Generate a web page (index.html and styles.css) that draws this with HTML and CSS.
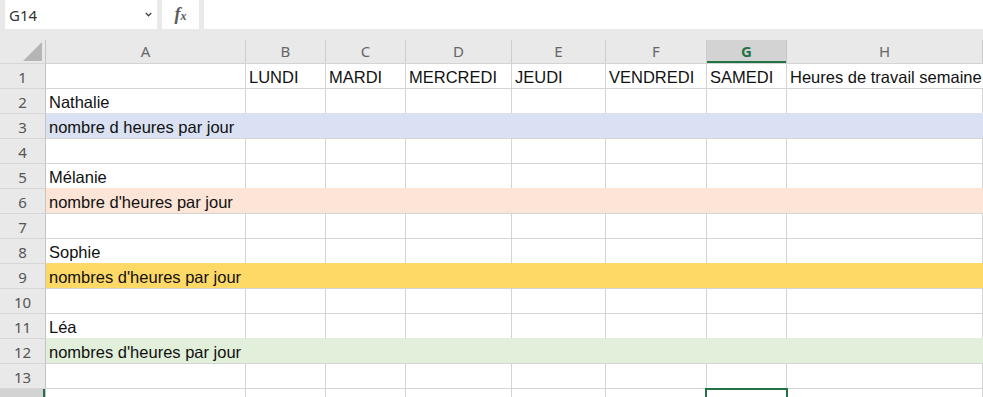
FILE: index.html
```html
<!DOCTYPE html>
<html lang="fr">
<head>
<meta charset="UTF-8" />
<title>Classeur1 - Excel</title>
<link rel="stylesheet" href="styles.css">
</head>
<body>
<div class="fbar">
	<div class="namebox">
		<span>G14</span>
		<svg width="7" height="5" viewBox="0 0 7 5"><polyline points="0.8,1 3.5,3.8 6.2,1" fill="none" stroke="#444" stroke-width="1.3"/></svg>
	</div>
	<div class="fxbox"><em>f<small>x</small></em></div>
	<div class="formula"></div>
</div>

<div class="head">
	<div class="ch corner"><svg width="19" height="19" viewBox="0 0 19 19"><polygon points="19,0 19,19 0,19" fill="#b5b5b5"/></svg></div>
	<div class="ch">A</div>
	<div class="ch">B</div>
	<div class="ch">C</div>
	<div class="ch">D</div>
	<div class="ch">E</div>
	<div class="ch">F</div>
	<div class="ch on">G</div>
	<div class="ch">H</div>
</div>

<div class="sheet">
	<div class="row">
		<div class="rh">1</div>
		<div class="c"></div>
		<div class="c">LUNDI</div>
		<div class="c">MARDI</div>
		<div class="c">MERCREDI</div>
		<div class="c">JEUDI</div>
		<div class="c">VENDREDI</div>
		<div class="c">SAMEDI</div>
		<div class="c">Heures de travail semaine</div>
	</div>
	<div class="row">
		<div class="rh">2</div>
		<div class="c">Nathalie</div>
		<div class="c"></div><div class="c"></div><div class="c"></div><div class="c"></div><div class="c"></div><div class="c"></div><div class="c"></div>
	</div>
	<div class="row">
		<div class="rh">3</div>
		<div class="c fill blue">nombre d heures par jour</div>
	</div>
	<div class="row">
		<div class="rh">4</div>
		<div class="c"></div><div class="c"></div><div class="c"></div><div class="c"></div><div class="c"></div><div class="c"></div><div class="c"></div><div class="c"></div>
	</div>
	<div class="row">
		<div class="rh">5</div>
		<div class="c">Mélanie</div>
		<div class="c"></div><div class="c"></div><div class="c"></div><div class="c"></div><div class="c"></div><div class="c"></div><div class="c"></div>
	</div>
	<div class="row">
		<div class="rh">6</div>
		<div class="c fill peach">nombre d'heures par jour</div>
	</div>
	<div class="row">
		<div class="rh">7</div>
		<div class="c"></div><div class="c"></div><div class="c"></div><div class="c"></div><div class="c"></div><div class="c"></div><div class="c"></div><div class="c"></div>
	</div>
	<div class="row">
		<div class="rh">8</div>
		<div class="c">Sophie</div>
		<div class="c"></div><div class="c"></div><div class="c"></div><div class="c"></div><div class="c"></div><div class="c"></div><div class="c"></div>
	</div>
	<div class="row">
		<div class="rh">9</div>
		<div class="c fill gold">nombres d'heures par jour</div>
	</div>
	<div class="row">
		<div class="rh">10</div>
		<div class="c"></div><div class="c"></div><div class="c"></div><div class="c"></div><div class="c"></div><div class="c"></div><div class="c"></div><div class="c"></div>
	</div>
	<div class="row">
		<div class="rh">11</div>
		<div class="c">Léa</div>
		<div class="c"></div><div class="c"></div><div class="c"></div><div class="c"></div><div class="c"></div><div class="c"></div><div class="c"></div>
	</div>
	<div class="row">
		<div class="rh">12</div>
		<div class="c fill green">nombres d'heures par jour</div>
	</div>
	<div class="row">
		<div class="rh">13</div>
		<div class="c"></div><div class="c"></div><div class="c"></div><div class="c"></div><div class="c"></div><div class="c"></div><div class="c"></div><div class="c"></div>
	</div>
	<div class="row">
		<div class="rh on">14</div>
		<div class="c"></div><div class="c"></div><div class="c"></div><div class="c"></div><div class="c"></div><div class="c"></div><div class="c sel"></div><div class="c"></div>
	</div>
</div>
</body>
</html>
```

FILE: styles.css
```css
* {
	box-sizing: border-box;
}
body {
	margin: 0;
	height: 397px;
	overflow: hidden;
	background: #e9e9e9;
	font-family: "Liberation Sans", Arial, sans-serif;
	user-select: none;
}

/* barre de formule */
.fbar {
	display: flex;
	gap: 5px;
	height: 29px;
	padding-left: 5px;
}
.namebox {
	width: 152px;
	background: #fff;
	display: flex;
	align-items: center;
	justify-content: space-between;
	padding: 0 5px 0 4px;
	font-family: "Noto Sans", sans-serif;
	font-size: 15px;
	color: #333;
}
.fxbox {
	width: 37px;
	background: #fff;
	display: flex;
	align-items: center;
	justify-content: center;
	padding-bottom: 1px;
}
.fxbox em {
	font-family: "Liberation Serif", serif;
	font-size: 18px;
	font-weight: bold;
	color: #5a5a5a;
}
.fxbox small {
	font-size: 12px;
}
.formula {
	flex: 1;
	background: #fff;
}

/* grille */
.head,
.row {
	display: grid;
	grid-template-columns: 46px 200px 80px 80px 106px 94px 101px 80px 1fr;
	height: 25px;
}
.head {
	margin-top: 9px;
	padding-top: 2px;
}
.ch {
	border-right: 1px solid #cdcdcd;
	text-align: center;
	font-family: "Noto Sans", sans-serif;
	font-size: 15px;
	line-height: 22px;
	color: #666;
}
.ch.corner {
	display: flex;
	justify-content: flex-end;
	align-items: flex-end;
	padding: 0 3px 2px 0;
	border-right-color: #c4c4c4;
}
.ch.on {
	background: #d3d3d3;
	color: #217346;
	font-weight: bold;
	box-shadow: inset 0 -2px #217346;
	border-right-color: #c4c4c4;
}
.sheet {
	background: #fff;
}
.rh {
	background: #e9e9e9;
	border-top: 1px solid #d6d6d6;
	border-right: 1px solid #c4c4c4;
	text-align: center;
	font-family: "Noto Sans", sans-serif;
	font-size: 15px;
	line-height: 20px;
	padding-top: 3px;
	color: #555;
}
.rh.on {
	background: #d3d3d3;
	color: #217346;
	box-shadow: inset -2px 0 #217346;
}
.c {
	display: flex;
	align-items: flex-end;
	border-top: 1px solid #d4d4d4;
	border-right: 1px solid #d4d4d4;
	padding: 0 3px 1px;
	font-size: 16.5px;
	line-height: 20px;
	color: #111;
	white-space: nowrap;
}
.c.fill {
	grid-column: 2 / -1;
	border-right: 0;
}
.blue {
	background: #d9e1f2;
	border-top-color: #d9e1f2;
}
.peach {
	background: #fce4d6;
	border-top-color: #fce4d6;
}
.gold {
	background: #ffd966;
	border-top-color: #ffd966;
}
.green {
	background: #e2efda;
	border-top-color: #e2efda;
}
.c.sel {
	position: relative;
}
.c.sel::after {
	content: "";
	position: absolute;
	top: -1px;
	left: -2px;
	right: -2px;
	bottom: -4px;
	border: 2px solid #217346;
}
```
